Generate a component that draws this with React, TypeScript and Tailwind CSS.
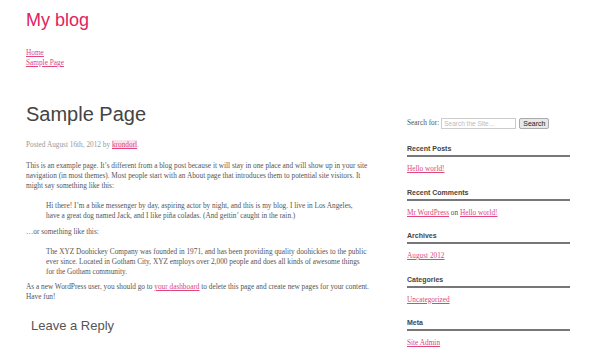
const serif = "font-['Liberation_Serif',serif]";
const sans = "font-['Liberation_Sans',Arial,sans-serif]";
const link = "text-[#e0457b] underline";

function Widget({ title, children }: { title: string; children: React.ReactNode }) {
  return (
    <div className="mb-[13.5px]">
      <h3 className={`${sans} text-[7px] font-bold text-[#444] leading-[10px] pb-[1px] border-b-2 border-[#777]`}>
        {title}
      </h3>
      <div className={`${serif} text-[7.3px] leading-[10px] text-[#555] mt-[7px]`}>{children}</div>
    </div>
  );
}

export default function App() {
  return (
    <div className="w-[600px] h-[349px] overflow-hidden bg-white px-[26px]">
      <header className="pt-[9px]">
        <h1 className={`${sans} text-[18px] leading-[22px] text-[#e0245e]`}>My blog</h1>
        <nav className={`${serif} text-[7.3px] leading-[10px] mt-[17px] flex flex-col items-start`}>
          <a className={link}>Home</a>
          <a className={link}>Sample Page</a>
        </nav>
      </header>

      <div className="flex mt-[34px]">
        <main className="w-[365px] shrink-0">
          <h2 className={`${sans} text-[20px] leading-[24px] text-[#444]`}>Sample Page</h2>
          <p className={`${serif} text-[7.3px] leading-[10px] text-[#999] mt-[14px]`}>
            Posted August 16th, 2012 by <a className={`${link} bg-[#fbe1ea]`}>krondorl</a>.
          </p>
          <div className={`${serif} text-[7.3px] leading-[10px] text-[#555]`}>
            <p className="mt-[11px]">
              This is an example page. It’s different from a blog post because it will stay in one place and will show up in your site<br />
              navigation (in most themes). Most people start with an About page that introduces them to potential site visitors. It<br />
              might say something like this:
            </p>
            <blockquote className="pl-[20px] mt-[10px]">
              Hi there! I’m a bike messenger by day, aspiring actor by night, and this is my blog. I live in Los Angeles,<br />
              have a great dog named Jack, and I like piña coladas. (And gettin’ caught in the rain.)
            </blockquote>
            <p className="mt-[6px]">…or something like this:</p>
            <blockquote className="pl-[20px] mt-[10px]">
              The XYZ Doohickey Company was founded in 1971, and has been providing quality doohickies to the public<br />
              ever since. Located in Gotham City, XYZ employs over 2,000 people and does all kinds of awesome things<br />
              for the Gotham community.
            </blockquote>
            <p className="mt-[5px]">
              As a new WordPress user, you should go to <a className={link}>your dashboard</a> to delete this page and create new pages for your content.<br />
              Have fun!
            </p>
          </div>
          <h3 className={`${sans} text-[13px] leading-[16px] text-[#555] mt-[16px] pl-[5px]`}>Leave a Reply</h3>
        </main>

        <aside className="w-[163px] ml-[16px] pt-[16px]">
          <div className={`${serif} text-[7.3px] text-[#555] flex items-center gap-[2px] mb-[15px]`}>
            <span>Search for:</span>
            <input
              placeholder="Search the Site..."
              className={`${sans} w-[75px] h-[11px] border border-[#ccc] px-[2px] text-[6.5px] placeholder:text-[#bbb] outline-none`}
            />
            <button className={`${sans} ml-[1px] h-[11px] px-[3px] text-[7px] text-[#222] bg-[#e8e8e8] border border-[#aaa] rounded-[2px] leading-none`}>
              Search
            </button>
          </div>
          <Widget title="Recent Posts">
            <a className={link}>Hello world!</a>
          </Widget>
          <Widget title="Recent Comments">
            <a className={link}>Mr WordPress</a> on <a className={link}>Hello world!</a>
          </Widget>
          <Widget title="Archives">
            <a className={link}>August 2012</a>
          </Widget>
          <Widget title="Categories">
            <a className={link}>Uncategorized</a>
          </Widget>
          <Widget title="Meta">
            <a className={link}>Site Admin</a>
          </Widget>
        </aside>
      </div>
    </div>
  );
}
